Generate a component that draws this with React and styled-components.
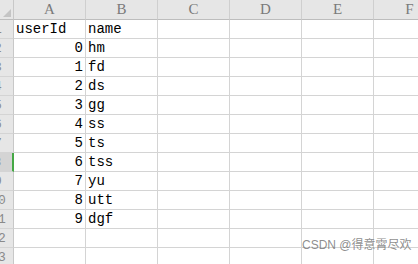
import React from "react";
import styled, { createGlobalStyle, css } from "styled-components";

const Global = createGlobalStyle`
  html, body { margin: 0; padding: 0; background: #ffffff; overflow: hidden; }
  body { width: 418px; height: 264px; }
`;

const Sheet = styled.div`
  position: relative;
  width: 418px;
  height: 264px;
  overflow: hidden;
  background: #ffffff;
`;

const Grid = styled.div`
  display: grid;
  grid-template-columns: 14px repeat(6, 72px);
  grid-auto-rows: 19px;
  grid-template-rows: 20px;
  width: max-content;
`;

const Corner = styled.div`
  position: relative;
  background: #e6e6e6;
  border-right: 1px solid #c8c8c8;
  border-bottom: 1px solid #bdbdbd;
  box-sizing: border-box;
`;

const CornerTri = styled.svg`
  position: absolute;
  right: 2px;
  bottom: 2px;
`;

const ColHead = styled.div`
  background: #e6e6e6;
  border-right: 1px solid #cfcfcf;
  border-bottom: 1px solid #bdbdbd;
  box-sizing: border-box;
  display: flex;
  align-items: flex-end;
  justify-content: center;
  padding-bottom: 1px;
  font-family: "Liberation Serif", serif;
  font-size: 15px;
  line-height: 17px;
  color: #7a7a7a;
`;

const RowHead = styled.div`
  background: ${(p) => (p.$active ? "#d4d4d4" : "#e6e6e6")};
  border-right: ${(p) => (p.$active ? "2px solid #45a845" : "1px solid #c8c8c8")};
  border-bottom: 1px solid #d4d4d4;
  box-sizing: border-box;
  overflow: hidden;
  display: flex;
  justify-content: flex-end;
  align-items: flex-end;
  ${(p) => p.$active && css`margin-right: -1px; width: 14px;`}
`;

const RowLabel = styled.span`
  flex: 0 0 ${(p) => (p.$active ? "29px" : "30px")};
  text-align: center;
  font-family: "Liberation Mono", monospace;
  font-size: 13px;
  line-height: 17px;
  color: #8a8a8a;
`;

const Cell = styled.div`
  border-right: 1px solid #d4d4d4;
  border-bottom: 1px solid #d4d4d4;
  box-sizing: border-box;
  display: flex;
  align-items: flex-end;
  justify-content: ${(p) => (p.$num ? "flex-end" : "flex-start")};
  padding: 0 ${(p) => (p.$num ? "2px" : "0")} 1px ${(p) => (p.$num ? "0" : "2px")};
  font-family: "Liberation Mono", monospace;
  font-size: 14px;
  line-height: 16px;
  color: #000000;
  white-space: nowrap;
  overflow: hidden;
`;

const Watermark = styled.div`
  position: absolute;
  left: 302px;
  top: 237px;
  font-family: "Liberation Sans", "Noto Sans CJK SC", sans-serif;
  font-size: 12px;
  line-height: 16px;
  color: rgba(120, 120, 120, 0.85);
  white-space: nowrap;
`;

const cols = ["A", "B", "C", "D", "E", "F"];
const rows = [
  ["userId", "name"],
  [0, "hm"],
  [1, "fd"],
  [2, "ds"],
  [3, "gg"],
  [4, "ss"],
  [5, "ts"],
  [6, "tss"],
  [7, "yu"],
  [8, "utt"],
  [9, "dgf"],
  [null, null],
  [null, null],
];

export default function App() {
  return (
    <Sheet>
      <Global />
      <Grid>
        <Corner>
          <CornerTri width="8" height="8" viewBox="0 0 8 8">
            <polygon points="8,0 8,8 0,8" fill="#c4c4c4" />
          </CornerTri>
        </Corner>
        {cols.map((c) => (
          <ColHead key={c}>{c}</ColHead>
        ))}
        {rows.map(([a, b], i) => {
          const active = i === 7;
          return (
            <React.Fragment key={i}>
              <RowHead $active={active}>
                <RowLabel $active={active}>{i + 1}</RowLabel>
              </RowHead>
              <Cell $num={typeof a === "number"}>{a}</Cell>
              <Cell>{b}</Cell>
              <Cell />
              <Cell />
              <Cell />
              <Cell />
            </React.Fragment>
          );
        })}
      </Grid>
      <Watermark>CSDN @得意霄尽欢</Watermark>
    </Sheet>
  );
}
